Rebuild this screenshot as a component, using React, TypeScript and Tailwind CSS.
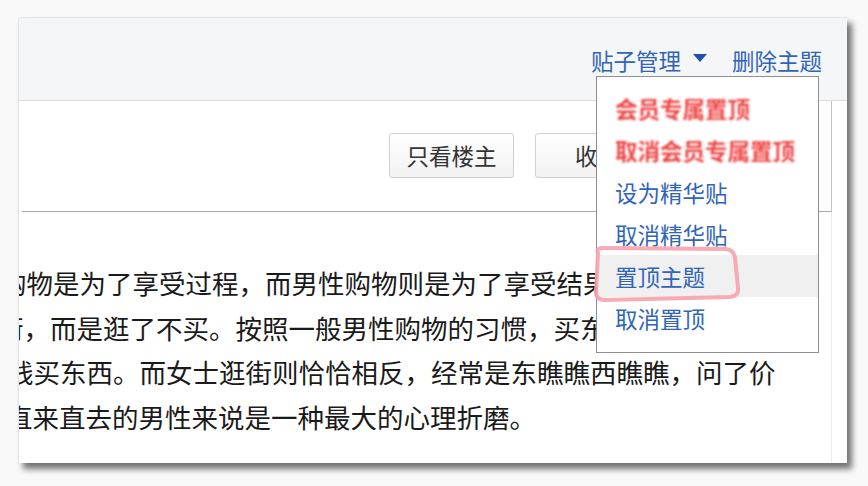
const bodyLines = [
  { text: "购物是为了享受过程，而男性购物则是为了享受结果，对他们来说", offset: "-ml-[19px]" },
  { text: "街，而是逛了不买。按照一般男性购物的习惯，买东西就是直奔主题", offset: "-ml-[22px]" },
  { text: "钱买东西。而女士逛街则恰恰相反，经常是东瞧瞧西瞧瞧，问了价", offset: "-ml-[12px]" },
  { text: "直来直去的男性来说是一种最大的心理折磨。", offset: "-ml-[13px]" },
];

const menuItems = [
  { label: "会员专属置顶", vip: true },
  { label: "取消会员专属置顶", vip: true },
  { label: "设为精华贴" },
  { label: "取消精华贴" },
  { label: "置顶主题", active: true },
  { label: "取消置顶" },
];

function CaretDown() {
  return (
    <svg width="14" height="8" viewBox="0 0 14 8" className="mt-[-4px]">
      <path d="M0 0 L14 0 L7 8 Z" fill="#1f4fb0" />
    </svg>
  );
}

function ToolButton({ label }: { label: string }) {
  return (
    <button
      type="button"
      className="h-[45px] w-[125px] rounded-[3px] border border-[#cfcfcf] bg-gradient-to-b from-white to-[#f2f2f2] text-[22.5px] leading-none text-[#333]"
    >
      {label}
    </button>
  );
}

export default function App() {
  return (
    <div className="relative h-[486px] w-[868px] overflow-hidden bg-[#f9f9f9] pl-[18px] pt-[17px] font-['Noto_Sans_CJK_SC','Microsoft_YaHei',sans-serif]">
      <div className="flex h-[446px] w-[829px] flex-col overflow-hidden rounded-tl-[4px] border-l border-t border-[#e3e3e3] bg-white shadow-[5px_6px_6px_rgba(0,0,0,0.55)]">
        {/* top bar */}
        <div className="flex h-[83px] shrink-0 items-start justify-end border-b border-[#dedede] bg-[#f5f6f8] pr-[25px] pt-[27px] text-[22.5px] leading-[30px] text-[#2f64b9]">
          <span className="flex items-center gap-[12px]">
            贴子管理
            <CaretDown />
          </span>
          <span className="ml-[25px]">删除主题</span>
        </div>

        <div className="flex flex-1">
          <div className="flex w-[813px] flex-col">
            {/* thread tools */}
            <div className="ml-[3px] flex h-[111px] shrink-0 items-start justify-end gap-[21px] border-b border-r border-b-[#a8a8a8] border-r-[#c4c4c4] pr-[171px] pt-[32px]">
              <ToolButton label="只看楼主" />
              <ToolButton label="收藏" />
            </div>

            {/* post body */}
            <div className="flex-1 overflow-hidden border-r border-[#ececec] pt-[49px] text-[26.5px] leading-[44.5px] text-[#1a1a1a]">
              {bodyLines.map((line) => (
                <p key={line.text} className={`whitespace-nowrap ${line.offset}`}>
                  {line.text}
                </p>
              ))}
            </div>
          </div>
          <div className="flex-1 bg-white" />
        </div>
      </div>

      {/* post management dropdown */}
      <div className="absolute left-[596px] top-[76px] h-[277px] w-[223px] border border-[#8e8e8e] bg-white pt-[10px]">
        {menuItems.map((item) => (
          <div
            key={item.label}
            className={`h-[42px] pl-[18px] text-[22.5px] leading-[42px] ${
              item.active ? "bg-[#f0f0f0]" : ""
            } ${item.vip ? "font-semibold text-[#f04545] blur-[0.8px]" : "text-[#2f64b9]"}`}
          >
            {item.label}
          </div>
        ))}
      </div>

      {/* hand-drawn highlight */}
      <svg
        className="pointer-events-none absolute inset-0"
        width="868"
        height="486"
        viewBox="0 0 868 486"
      >
        <path
          d="M598 253 Q596 248 603 248 L726 249 Q734 250 735 258 L738 288 Q739 296 730 297 L605 300 Q596 300 596 292 Z"
          fill="none"
          stroke="#f6a2ad"
          strokeWidth="4"
          strokeLinejoin="round"
          opacity="0.9"
        />
      </svg>
    </div>
  );
}
